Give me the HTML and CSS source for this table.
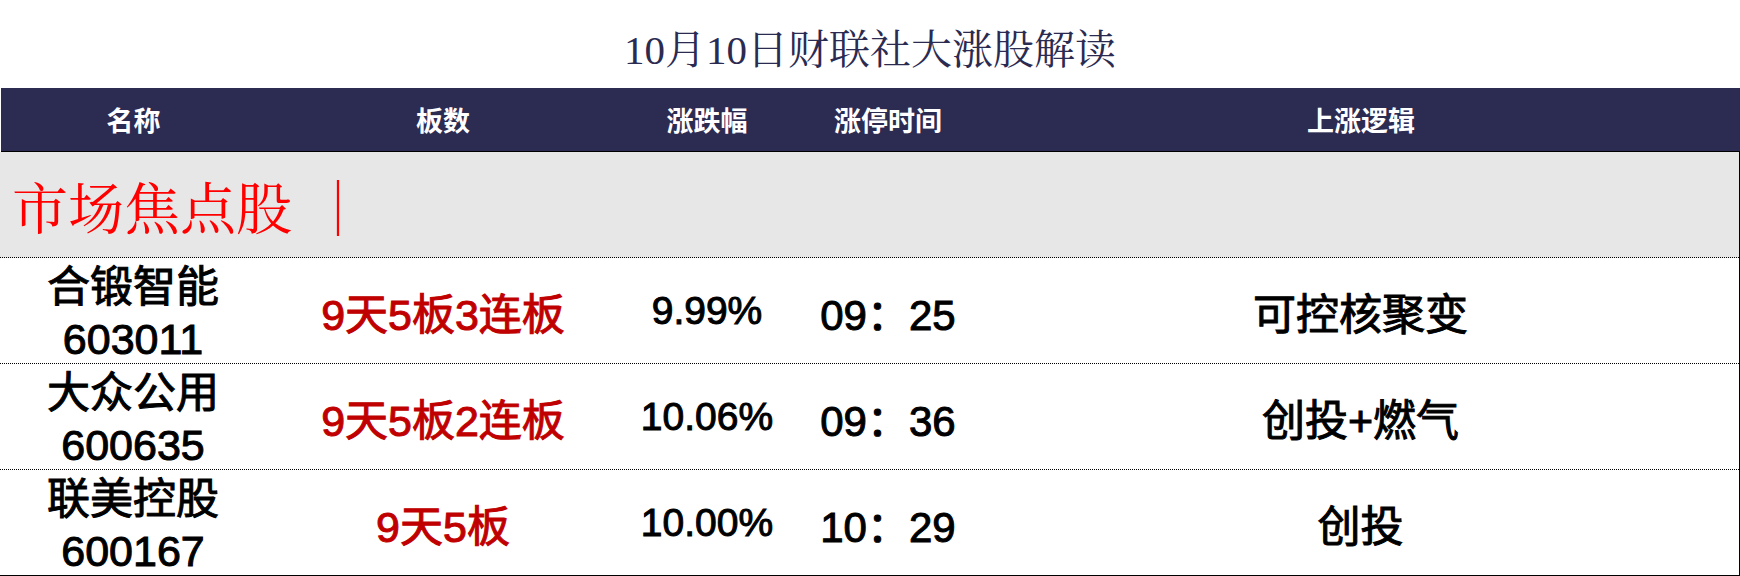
FILE: index.html
```html
<!DOCTYPE html>
<html lang="zh-CN">
<head>
<meta charset="utf-8">
<title>10月10日财联社大涨股解读</title>
<link rel="stylesheet" href="styles.css">
</head>
<body>
<div class="page">
  <h1 class="title">10月10日财联社大涨股解读</h1>
  <div class="thead">
    <div class="th">名称</div>
    <div class="th">板数</div>
    <div class="th">涨跌幅</div>
    <div class="th">涨停时间</div>
    <div class="th">上涨逻辑</div>
  </div>
  <div class="tbody">
    <div class="section"><span class="section-name">市场焦点股</span><span class="section-bar">｜</span></div>
    <div class="row">
      <div class="cell name"><span class="cn">合锻智能</span><span class="code">603011</span></div>
      <div class="cell boards">9天5板3连板</div>
      <div class="cell pct">9.99%</div>
      <div class="cell time">09<span class="colon">：</span>25</div>
      <div class="cell logic">可控核聚变</div>
    </div>
    <div class="row">
      <div class="cell name"><span class="cn">大众公用</span><span class="code">600635</span></div>
      <div class="cell boards">9天5板2连板</div>
      <div class="cell pct">10.06%</div>
      <div class="cell time">09<span class="colon">：</span>36</div>
      <div class="cell logic">创投+燃气</div>
    </div>
    <div class="row last">
      <div class="cell name"><span class="cn">联美控股</span><span class="code">600167</span></div>
      <div class="cell boards">9天5板</div>
      <div class="cell pct">10.00%</div>
      <div class="cell time">10<span class="colon">：</span>29</div>
      <div class="cell logic">创投</div>
    </div>
  </div>
</div>
</body>
</html>
```
FILE: styles.css
```css
html, body {
  margin: 0;
  padding: 0;
  background: #ffffff;
}

.page {
  width: 1740px;
  height: 576px;
  overflow: hidden;
}

.title {
  margin: 0;
  height: 88px;
  box-sizing: border-box;
  padding: 4px 0 0 0;
  display: flex;
  align-items: center;
  justify-content: center;
  font-family: "Liberation Serif", "Noto Serif CJK SC", "Noto Sans CJK SC", serif;
  font-weight: 400;
  font-size: 41px;
  color: #2b2b52;
}

.thead {
  display: grid;
  grid-template-columns: 265px 354px 174px 188px 1fr;
  height: 63px;
  margin-left: 1px;
  background: #2c2b52;
  border-bottom: 1px solid #000;
  align-items: center;
  text-align: center;
  color: #ffffff;
  font-family: "Noto Sans CJK SC", sans-serif;
  font-weight: 700;
  font-size: 27px;
}

.tbody {
  border-right: 1px solid #000;
}

.section {
  height: 105px;
  background: #e7e7e7;
  border-bottom: 1px dotted #000;
  display: flex;
  align-items: center;
  padding-left: 12px;
  color: #ff0000;
  font-family: "Noto Serif CJK SC", "Liberation Serif", serif;
  font-size: 56px;
}

.section-bar {
  margin-left: 18px;
}

.row {
  display: grid;
  grid-template-columns: 266px 354px 174px 188px 1fr;
  height: 105px;
  border-bottom: 1px dotted #000;
  align-items: center;
  text-align: center;
  color: #000;
  font-family: "Liberation Sans", "Noto Sans CJK SC", sans-serif;
  font-size: 42px;
  font-weight: 400;
  -webkit-text-stroke: 1px currentColor;
}

.row.last {
  border-bottom: 1px solid #000;
}

.name {
  display: flex;
  flex-direction: column;
  align-items: center;
  font-size: 43px;
}

.cn {
  line-height: 54px;
  padding-top: 2px;
}

.code {
  line-height: 50px;
}

.boards {
  color: #c00000;
  font-size: 43px;
}

.pct {
  font-size: 39px;
}

.logic {
  font-size: 43px;
}
```
